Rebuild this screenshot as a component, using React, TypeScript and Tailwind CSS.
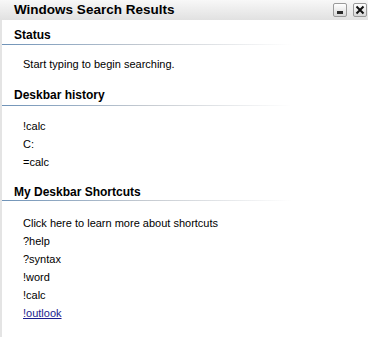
import React from 'react';

const font = { fontFamily: '"Liberation Sans", Arial, sans-serif' };

function Heading({ title, top, gap }: { title: string; top: string; gap: string }) {
  return (
    <div className={top}>
      <div className="pl-[12px] h-[12px] text-[12px] font-bold text-black leading-[12px] whitespace-nowrap">
        {title}
      </div>
      <div className={`h-px w-[290px] ${gap} bg-gradient-to-r from-[#6f93b8] via-[#c6cbd1] to-transparent`} />
    </div>
  );
}

function Item({ text, link }: { text: string; link?: boolean }) {
  return (
    <div
      className={`h-[18px] pl-[21px] text-[11px] leading-[18px] whitespace-nowrap ${
        link ? 'text-[#1c1c8e] underline' : 'text-black'
      }`}
    >
      {text}
    </div>
  );
}

function TitleButton({ kind }: { kind: 'min' | 'close' }) {
  return (
    <div className="w-[14px] h-[14px] rounded-[2px] border border-[#9a9a9a] bg-gradient-to-b from-white to-[#d8d8d8] flex items-center justify-center">
      {kind === 'min' ? (
        <div className="w-[6px] h-[3px] bg-[#2a2a2a] mt-[5px]" />
      ) : (
        <svg width="10" height="10" viewBox="0 0 10 10">
          <path d="M1.5 1.5 L8.5 8.5 M8.5 1.5 L1.5 8.5" stroke="#111" strokeWidth="2" />
        </svg>
      )}
    </div>
  );
}

export default function App() {
  return (
    <div className="w-[368px] h-[337px] bg-white overflow-hidden flex flex-col" style={font}>
      <div className="h-[20px] shrink-0 flex items-center justify-between bg-gradient-to-b from-[#f8f8f8] to-[#e1e1e1] pl-[14px] pr-[1px]">
        <span className="text-[13.5px] font-bold text-black leading-none pb-[1px]">Windows Search Results</span>
        <div className="flex gap-[6px]">
          <TitleButton kind="min" />
          <TitleButton kind="close" />
        </div>
      </div>
      <div className="flex-1 border-l-2 border-[#e4e4e4]">
        <Heading title="Status" top="pt-[9px]" gap="mt-[3px]" />
        <div className="pt-[10px]">
          <Item text="Start typing to begin searching." />
        </div>
        <Heading title="Deskbar history" top="pt-[16px]" gap="mt-[4px]" />
        <div className="pt-[11px]">
          <Item text="!calc" />
          <Item text="C:" />
          <Item text="=calc" />
        </div>
        <Heading title="My Deskbar Shortcuts" top="pt-[15px]" gap="mt-[2px]" />
        <div className="pt-[13px]">
          <Item text="Click here to learn more about shortcuts" />
          <Item text="?help" />
          <Item text="?syntax" />
          <Item text="!word" />
          <Item text="!calc" />
          <Item text="!outlook" link />
        </div>
      </div>
    </div>
  );
}
